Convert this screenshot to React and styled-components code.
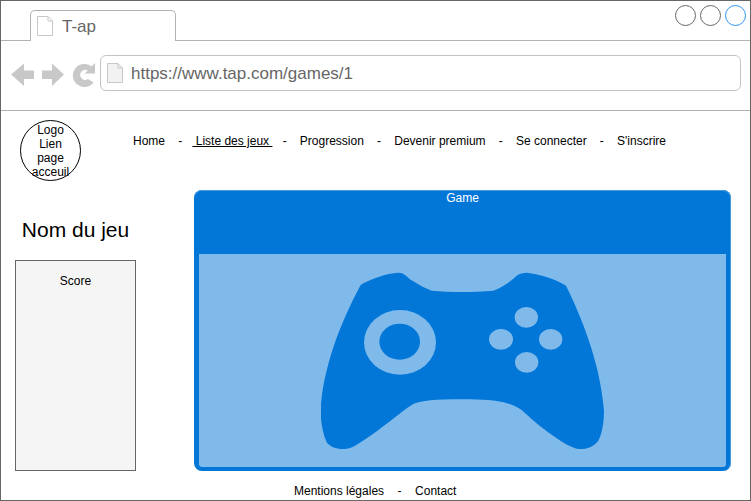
import React from 'react';
import styled, { createGlobalStyle } from 'styled-components';

const GlobalStyle = createGlobalStyle`
  html, body {
    margin: 0;
    padding: 0;
    background: #fff;
    font-family: "Liberation Sans", Arial, sans-serif;
  }
`;

const DocIcon = ({ size = 16, fill = '#fff' }) => (
  <DocSvg width={size} height={size * 1.25} viewBox="0 0 16 20">
    <path d="M.5.5H11L15.5 5V19.5H.5Z" fill={fill} stroke="#c8c8c8" />
    <path d="M11 .5V5H15.5" fill="none" stroke="#c8c8c8" />
  </DocSvg>
);

const BackIcon = () => (
  <svg width="23" height="24" viewBox="0 0 23 24">
    <path d="M0 11.500 13 .5V7.500H23V16H13V23Z" fill="#c8c8c8" />
  </svg>
);

const ForwardIcon = () => (
  <svg width="22" height="24" viewBox="0 0 22 24">
    <path d="M22 11.500 10 .5V7.500H0V16H10V23Z" fill="#c8c8c8" />
  </svg>
);

const ReloadIcon = () => (
  <svg width="23" height="24" viewBox="0 0 23 24">
    <path
      d="M19.500 3.500 23 0V10.500H12.700L15.800 7.500A5 5 0 1 0 16 16L21.500 19.500A11.500 11.500 0 1 1 19.500 3.500Z"
      fill="#c8c8c8"
    />
  </svg>
);

const Gamepad = () => (
  <svg width="283" height="178" viewBox="33 35 849 532">
    <path
      fill="#0277d8"
      d="M152 73C180 55 230 38 265 36C285 36 290 50 310 62C330 75 350 85 365 90C420 95 490 95 550 90C575 80 600 65 620 45C630 38 640 36 650 36C690 40 735 55 768 75C810 160 870 300 882 450C882 490 875 520 865 540C850 560 825 567 805 565C770 560 690 500 635 448C600 425 560 417 480 416C400 416 350 417 315 428C290 437 200 520 135 555C110 570 70 570 50 545C35 510 30 470 33 430C45 300 100 170 152 73Z"
    />
    <ellipse cx="270" cy="245" rx="108" ry="97" fill="#7fbaeb" />
    <ellipse cx="269" cy="243" rx="61" ry="54" fill="#0277d8" />
    <ellipse cx="649" cy="170" rx="35" ry="31" fill="#7fbaeb" />
    <ellipse cx="573" cy="236" rx="36" ry="31" fill="#7fbaeb" />
    <ellipse cx="722" cy="236" rx="35" ry="31" fill="#7fbaeb" />
    <ellipse cx="650" cy="305" rx="35" ry="31" fill="#7fbaeb" />
  </svg>
);

const navLinks = [
  { label: 'Home' },
  { label: ' Liste des jeux ', active: true },
  { label: 'Progression' },
  { label: 'Devenir premium' },
  { label: 'Se connecter' },
  { label: "S'inscrire" },
];

const App = () => (
  <>
    <GlobalStyle />
    <BrowserWindow>
      <TabBar>
        <Tab>
          <DocIcon />
          <TabTitle>T-ap</TabTitle>
        </Tab>
        <WindowButtons>
          <WindowButton />
          <WindowButton />
          <WindowButton $active />
        </WindowButtons>
      </TabBar>

      <AddressRow>
        <NavIcons>
          <BackIcon />
          <ForwardIcon />
          <ReloadIcon />
        </NavIcons>
        <AddressBar>
          <DocIcon size={16} fill="#f2f2f2" />
          <Url>https://www.tap.com/games/1</Url>
        </AddressBar>
      </AddressRow>

      <Header>
        <Logo>
          Logo
          <br />
          Lien
          <br />
          page
          <br />
          acceuil
        </Logo>
        <Nav>
          {navLinks.map((link, i) => (
            <React.Fragment key={link.label}>
              {i > 0 && <span>-</span>}
              <NavLink $active={link.active}>{link.label}</NavLink>
            </React.Fragment>
          ))}
        </Nav>
      </Header>

      <Main>
        <Sidebar>
          <GameName>Nom du jeu</GameName>
          <ScoreBox>Score</ScoreBox>
        </Sidebar>
        <GamePanel>
          <GameHeader>Game</GameHeader>
          <GameBody>
            <Gamepad />
          </GameBody>
        </GamePanel>
      </Main>

      <Footer>
        <span>Mentions légales</span>
        <span>-</span>
        <span>Contact</span>
      </Footer>
    </BrowserWindow>
  </>
);

export default App;

const BrowserWindow = styled.div`
  width: 751px;
  height: 501px;
  box-sizing: border-box;
  border: 1px solid #666;
  background: #fff;
  overflow: hidden;
  color: #000;
  font-size: 12px;
`;

const DocSvg = styled.svg`
  flex: none;
  display: block;
`;

const TabBar = styled.div`
  height: 40px;
  box-sizing: border-box;
  border-bottom: 1px solid #b3b3b3;
  display: flex;
  justify-content: space-between;
  padding: 0 4px 0 29px;
`;

const Tab = styled.div`
  width: 146px;
  height: 31px;
  margin-top: 9px;
  box-sizing: border-box;
  border: 1px solid #b3b3b3;
  border-bottom: none;
  border-radius: 5px 5px 0 0;
  background: #fff;
  display: flex;
  align-items: center;
  gap: 9px;
  padding: 0 0 0 6px;
`;

const TabTitle = styled.span`
  font-size: 17px;
  color: #666;
  margin-top: 2px;
`;

const WindowButtons = styled.div`
  display: flex;
  gap: 4px;
  margin-top: 4px;
`;

const WindowButton = styled.div`
  width: 21px;
  height: 21px;
  box-sizing: border-box;
  border-radius: 50%;
  border: 1px solid ${(p) => (p.$active ? '#2a96f3' : '#666')};
`;

const AddressRow = styled.div`
  height: 70px;
  box-sizing: border-box;
  border-bottom: 1px solid #b3b3b3;
  display: flex;
  align-items: flex-start;
  padding: 14px 9px 0 10px;
  gap: 5px;
`;

const NavIcons = styled.div`
  display: flex;
  gap: 8px;
  margin-top: 8px;
`;

const AddressBar = styled.div`
  flex: 1;
  height: 36px;
  box-sizing: border-box;
  border: 1px solid #c4c4c4;
  border-radius: 6px;
  display: flex;
  align-items: center;
  gap: 8px;
  padding-left: 6px;
`;

const Url = styled.span`
  font-size: 17px;
  color: #666;
  margin-top: 2px;
`;

const Header = styled.header`
  display: flex;
  align-items: flex-start;
  padding: 9px 0 0 19px;
`;

const Logo = styled.div`
  width: 61px;
  height: 61px;
  box-sizing: border-box;
  border: 1px solid #000;
  border-radius: 50%;
  text-align: center;
  line-height: 14px;
  padding-top: 2px;
  white-space: nowrap;
`;

const Nav = styled.nav`
  display: flex;
  gap: 13.2px;
  margin: 14px 0 0 52px;
  line-height: 14px;
`;

const NavLink = styled.span`
  white-space: pre;
  margin: 0 ${(p) => (p.$active ? '-3px' : '0')};
  text-decoration: ${(p) => (p.$active ? 'underline' : 'none')};
`;

const Main = styled.main`
  display: flex;
  gap: 58px;
  margin-top: 9px;
  padding-left: 14px;
`;

const Sidebar = styled.aside`
  width: 121px;
  display: flex;
  flex-direction: column;
  justify-content: flex-end;
  align-items: center;
`;

const GameName = styled.h1`
  margin: 0 0 17px;
  font-size: 21px;
  font-weight: 400;
  line-height: 26px;
  white-space: nowrap;
`;

const ScoreBox = styled.div`
  width: 121px;
  height: 211px;
  box-sizing: border-box;
  border: 1px solid #666;
  background: #f5f5f5;
  text-align: center;
  padding-top: 13px;
  line-height: 14px;
`;

const GamePanel = styled.section`
  width: 537px;
  height: 281px;
  box-sizing: border-box;
  background: #0277d8;
  border-radius: 8px;
  box-shadow: inset 0 1px 0 #4a9ce0, inset -1px 0 0 #4a9ce0;
  padding: 0 5px 4px;
  display: flex;
  flex-direction: column;
`;

const GameHeader = styled.div`
  height: 64px;
  flex: none;
  color: #fff;
  text-align: center;
  line-height: 14px;
  box-sizing: border-box;
  padding-top: 1px;
`;

const GameBody = styled.div`
  flex: 1;
  background: #7fbaeb;
  border-radius: 0 0 3px 3px;
  display: flex;
  align-items: center;
  justify-content: center;
`;

const Footer = styled.footer`
  display: flex;
  gap: 13.5px;
  padding: 13px 0 0 293px;
  line-height: 14px;
`;
